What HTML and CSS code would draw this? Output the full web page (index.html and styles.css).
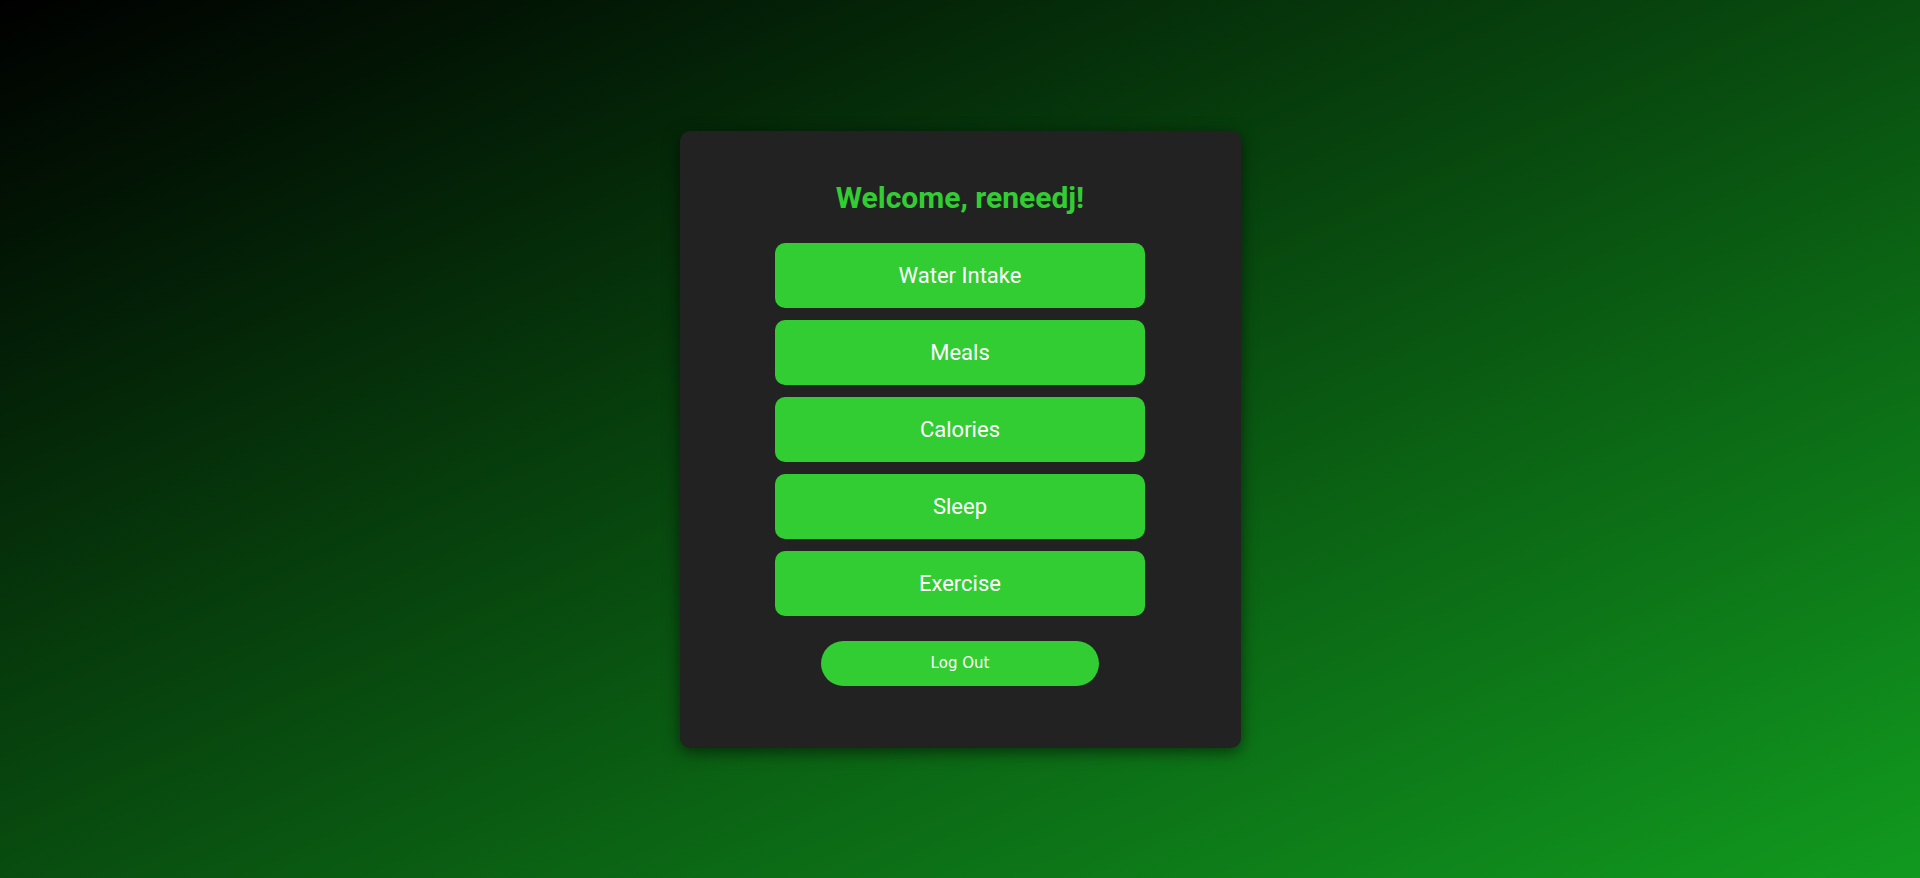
FILE: index.html
```html
<!DOCTYPE html>
<html lang="en">
<head>
<meta charset="utf-8">
<title>Dashboard</title>
<link rel="stylesheet" href="styles.css">
</head>
<body>
<main class="page">
  <section class="card">
    <h2 class="welcome">Welcome, reneedj!</h2>
    <nav class="menu">
      <button class="menu-btn">Water Intake</button>
      <button class="menu-btn">Meals</button>
      <button class="menu-btn">Calories</button>
      <button class="menu-btn">Sleep</button>
      <button class="menu-btn">Exercise</button>
    </nav>
    <button class="logout">Log Out</button>
  </section>
</main>
</body>
</html>
```

FILE: styles.css
```css
html, body {
  margin: 0;
  padding: 0;
  height: 100%;
}
body {
  background: linear-gradient(to bottom right, #000000 0%, #119a1f 100%);
  font-family: Roboto, "Liberation Sans", sans-serif;
}
.page {
  height: 100%;
  display: flex;
  align-items: center;
  justify-content: center;
}
.card {
  box-sizing: border-box;
  width: 561px;
  background: #222222;
  border-radius: 10px;
  box-shadow: 0 4px 16px rgba(0, 0, 0, 0.55);
  padding: 49px 0 62px;
  display: flex;
  flex-direction: column;
  align-items: center;
}
.welcome {
  margin: 0 0 27px;
  font-size: 30px;
  line-height: 36px;
  font-weight: 700;
  color: #32cd32;
}
.menu {
  display: flex;
  flex-direction: column;
  gap: 12px;
  width: 370px;
}
.menu-btn {
  height: 65px;
  border: none;
  border-radius: 10px;
  background: #32cd32;
  color: #ffffff;
  font-family: Roboto, "Liberation Sans", sans-serif;
  font-size: 22px;
  cursor: pointer;
}
.logout {
  margin-top: 25px;
  width: 278px;
  height: 45px;
  border: none;
  border-radius: 23px;
  background: #32cd32;
  color: #ffffff;
  font-family: "DejaVu Sans", sans-serif;
  font-size: 15px;
  cursor: pointer;
}
```
